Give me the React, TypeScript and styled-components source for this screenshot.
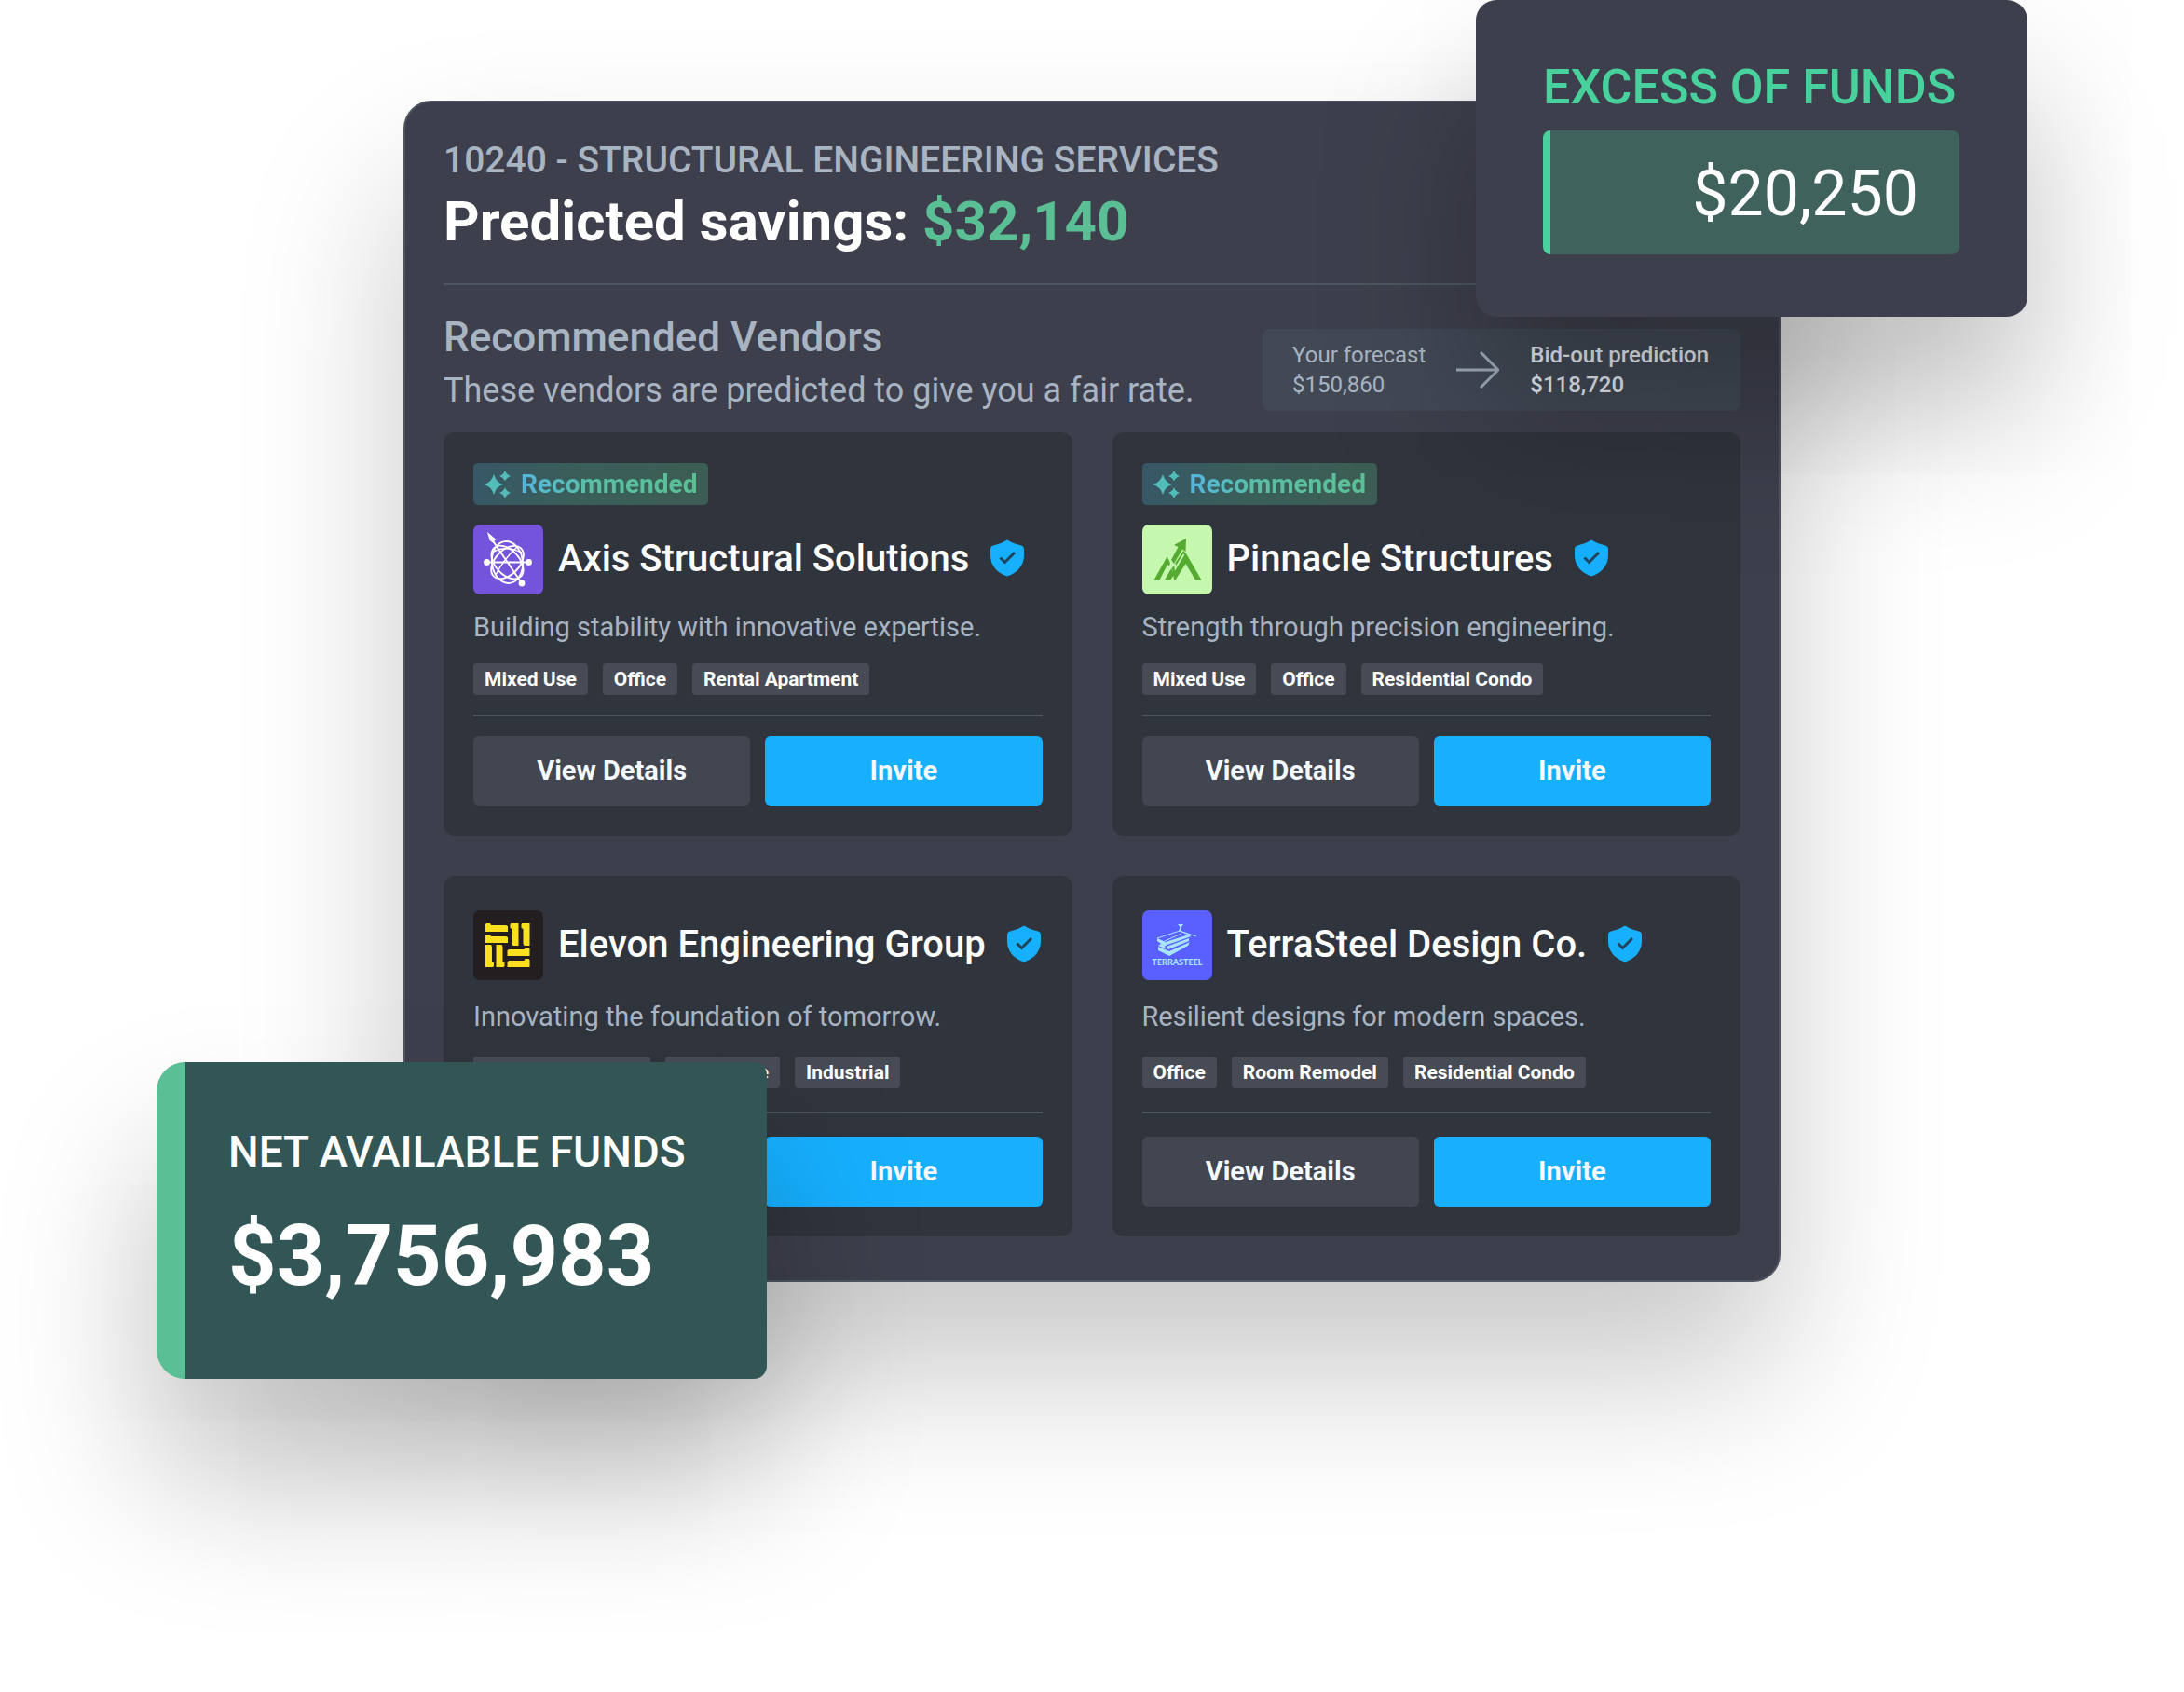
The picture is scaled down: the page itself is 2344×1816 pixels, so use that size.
import React from "react";
import styled, { createGlobalStyle, css } from "styled-components";

const GlobalStyle = createGlobalStyle`
  *, *::before, *::after { box-sizing: border-box; }
  body {
    margin: 0;
    background: #ffffff;
    font-family: Roboto, "Liberation Sans", sans-serif;
    -webkit-font-smoothing: antialiased;
  }
  h1, h2, h3, p, ul { margin: 0; padding: 0; }
`;

const color = {
  panel: "#3d3f4c",
  card: "#30343d",
  line: "#4e5560",
  muted: "#a9b4c2",
  white: "#ffffff",
  green: "#5bbf95",
  mint: "#48d19c",
  blue: "#16b0ff",
};

const Page = styled.main`
  display: grid;
  grid-template-columns: 433fr 1478fr 433fr;
  min-height: 100vh;
  padding: 108px 0;
  overflow: hidden;
  align-items: start;
`;

const Stage = styled.div`
  grid-column: 2;
  position: relative;
`;

const Panel = styled.section`
  display: flex;
  flex-direction: column;
  padding: 40px 41px 47px;
  background: ${color.panel};
  border: 2px solid ${color.line};
  border-radius: 30px;
  box-shadow: 0 96px 172px rgba(0, 0, 0, 0.22);
`;

const PanelHeader = styled.header`
  padding-bottom: 30px;
  border-bottom: 2px solid ${color.line};
`;

const ServiceName = styled.p`
  color: ${color.muted};
  font-size: 39px;
  font-weight: 500;
  line-height: 44px;
`;

const Savings = styled.h1`
  color: ${color.white};
  font-size: 60px;
  font-weight: 700;
  line-height: 72px;
  margin-top: 8px;
`;

const SavingsAmount = styled.span`
  color: ${color.green};
`;

const VendorsIntro = styled.div`
  display: flex;
  justify-content: space-between;
  align-items: flex-end;
  padding: 30px 0 23px;
`;

const IntroTitle = styled.h2`
  color: ${color.muted};
  font-size: 44px;
  font-weight: 500;
  line-height: 52px;
`;

const IntroText = styled.p`
  color: ${color.muted};
  font-size: 36px;
  line-height: 44px;
  padding: 9px 0 0;
`;

const Forecast = styled.div`
  display: flex;
  align-items: center;
  gap: 33px;
  padding: 12px 34px 12px 32px;
  border-radius: 8px;
  background: #424955;
`;

const ForecastItem = styled.div<{ $strong?: boolean }>`
  font-size: 24px;
  line-height: 32px;
  color: ${(p) => (p.$strong ? "#e6ebf2" : color.muted)};
  font-weight: ${(p) => (p.$strong ? 500 : 400)};
`;

const VendorGrid = styled.div`
  display: grid;
  grid-template-columns: 1fr 1fr;
  gap: 43px;
`;

const Card = styled.article<{ $featured?: boolean }>`
  display: flex;
  flex-direction: column;
  gap: ${(p) => (p.$featured ? 21 : 25)}px;
  padding: ${(p) => (p.$featured ? 33 : 37)}px 32px 32px;
  border-radius: 12px;
  background: ${color.card};
`;

const Badge = styled.div`
  align-self: flex-start;
  display: flex;
  align-items: center;
  gap: 9px;
  height: 45px;
  padding: 0 12px 0 11px;
  border-radius: 5px;
  background: linear-gradient(100deg, #375766 0%, #3a5f59 45%, #3c5d53 100%);
`;

const BadgeText = styled.span`
  font-size: 28px;
  font-weight: 700;
  line-height: 32px;
  color: transparent;
  background: linear-gradient(100deg, #55b4e0 0%, #5bbfa5 40%, #5bbf95 100%);
  background-clip: text;
  -webkit-background-clip: text;
`;

const VendorHeading = styled.div`
  display: flex;
  align-items: center;
  gap: 16px;
`;

const LogoTile = styled.svg`
  flex: none;
  width: 75px;
  height: 75px;
  border-radius: 7px;
`;

const VendorName = styled.h3`
  color: ${color.white};
  font-size: 40px;
  font-weight: 500;
  line-height: 48px;
  white-space: nowrap;
  padding-bottom: 2px;
`;

const ShieldIcon = styled.svg`
  flex: none;
  width: 38px;
  height: 40px;
  margin: 0 0 4px 6px;
`;

const Tagline = styled.p`
  color: ${color.muted};
  font-size: 29px;
  line-height: 28px;
  margin-bottom: 4px;
`;

const TagList = styled.ul`
  display: flex;
  gap: 16px;
  list-style: none;
`;

const Tag = styled.li`
  padding: 0 12px;
  border-radius: 4px;
  background: #474b55;
  color: ${color.white};
  font-size: 21px;
  font-weight: 700;
  line-height: 34px;
  white-space: nowrap;
`;

const Rule = styled.hr`
  width: 100%;
  height: 2px;
  margin: 0;
  border: 0;
  background: ${color.line};
`;

const Actions = styled.div`
  display: grid;
  grid-template-columns: 1fr 1fr;
  gap: 16px;
`;

const ActionButton = styled.button<{ $primary?: boolean }>`
  height: 75px;
  padding: 0 0 2px;
  border: 0;
  border-radius: 6px;
  background: ${(p) => (p.$primary ? color.blue : "#424651")};
  color: #f4f8ff;
  font-family: inherit;
  font-size: 29px;
  font-weight: 700;
  cursor: pointer;
`;

const floating = css`
  position: absolute;
  height: 340px;
  box-shadow: 0 104px 164px rgba(0, 0, 0, 0.26);
`;

const ExcessCard = styled.aside`
  ${floating}
  top: -108px;
  right: -265px;
  width: 592px;
  padding: 63px 73px 0 72px;
  border-radius: 22px;
  background: ${color.panel};
`;

const ExcessLabel = styled.p`
  color: ${color.mint};
  font-size: 52px;
  font-weight: 500;
  line-height: 62px;
  white-space: nowrap;
`;

const ExcessValue = styled.p`
  height: 133px;
  margin-top: 15px;
  padding-right: 44px;
  border-left: 8px solid ${color.mint};
  border-radius: 8px;
  background: #3f625d;
  color: ${color.white};
  font-size: 68px;
  line-height: 136px;
  text-align: right;
`;

const NetCard = styled.aside`
  ${floating}
  left: -265px;
  bottom: -104px;
  width: 655px;
  padding: 70px 46px 0;
  border-left: 31px solid ${color.green};
  border-radius: 31px 14px 14px 31px;
  background: #325655;
`;

const NetLabel = styled.p`
  color: ${color.white};
  font-size: 46px;
  font-weight: 500;
  line-height: 52px;
  white-space: nowrap;
`;

const NetValue = styled.p`
  color: ${color.white};
  font-size: 90px;
  font-weight: 700;
  line-height: 106px;
  margin-top: 34px;
`;

function Sparkles() {
  return (
    <svg width="31" height="32" viewBox="0 0 31 32" aria-hidden="true">
      <g fill="#53bdb9">
        <path d="M11 5 Q13.500 14 21 16 Q13.500 18 11 27 Q8.500 18 0 16 Q8.500 14 11 5Z" />
        <path d="M23 1 Q24.500 5.500 29 7 Q24.500 8.500 23 12.500 Q21.500 8.500 17 7 Q21.500 5.500 23 1Z" />
        <path d="M23 19 Q24.500 23.500 29 25 Q24.500 26.500 23 31 Q21.500 26.500 17 25 Q21.500 23.500 23 19Z" />
      </g>
    </svg>
  );
}

function Shield() {
  return (
    <ShieldIcon viewBox="0 0 38 40" role="img" aria-label="Verified">
      <path
        d="M19 0.500 C23 3 28 5 34 6.500 Q37 7.300 37 10.500 V17 C37 28 30 36 19 39.500 C8 36 1 28 1 17 V10.500 Q1 7.300 4 6.500 C10 5 15 3 19 0.500Z"
        fill={color.blue}
      />
      <path d="M11.500 19.500 L16.500 24.500 L27 14" fill="none" stroke="#20445c" strokeWidth="3" />
    </ShieldIcon>
  );
}

function ArrowRight() {
  return (
    <svg width="46" height="40" viewBox="0 0 46 40" aria-hidden="true">
      <path d="M0 20 H44 M26 1 L45 20 L26 39" fill="none" stroke="#9fabb9" strokeWidth="3" />
    </svg>
  );
}

function AxisLogo() {
  return (
    <LogoTile viewBox="0 0 75 75" aria-hidden="true">
      <rect width="75" height="75" fill="#7554dc" />
      <g fill="none" stroke="#fff" strokeWidth="1.900">
        <ellipse cx="36.500" cy="40.500" rx="16.500" ry="22.500" transform="rotate(-7 36.500 40.500)" />
        <ellipse cx="36.500" cy="40.500" rx="13" ry="21" transform="rotate(-42 36.500 40.500)" />
        <ellipse cx="36.500" cy="40.500" rx="13" ry="21" transform="rotate(44 36.500 40.500)" />
        <path d="M14 40.500 H60 M20 16 L52 63" />
        <path d="M22 29 Q34 22 52 30 M24 54 Q32 38 47 24" strokeWidth="1.500" />
      </g>
      <path d="M15 8 L24.500 16 L22.500 17.500 L22 20 L17.500 17Z" fill="#fff" />
      <circle cx="14.500" cy="40.500" r="3.400" fill="#fff" />
      <circle cx="59.500" cy="40.500" r="3.400" fill="#fff" />
      <circle cx="52" cy="63" r="3.400" fill="#fff" />
    </LogoTile>
  );
}

function PinnacleLogo() {
  return (
    <LogoTile viewBox="0 0 75 75" aria-hidden="true">
      <rect width="75" height="75" fill="#c6f7ae" />
      <g fill="#55ab32">
        <path d="M47 15 L34 22 L38.500 24 L31 38 L34 42 L43 26.500 L46.500 29Z" />
        <path d="M12.500 59.500 L26.500 34.500 L30 41 L29 44.500 L27 43 L18.500 59.500Z" />
        <path d="M24 59.500 L30.500 48 L33 50 L47 31 L63.500 59.500 H57 L46.500 42 L35.500 59.500 H34 L33.500 55 L30 59.500Z" />
        <path d="M31 48 L44 28 L47 31 L36 52Z" />
      </g>
      <path d="M32 45 L35 43 L35.500 47 L44.500 32" fill="none" stroke="#c6f7ae" strokeWidth="1.800" />
    </LogoTile>
  );
}

const oneGlyph = "M0 1 L1 0 H9 V24 H3 L2 22 V6 L0 5Z";

function ElevonLogo() {
  return (
    <LogoTile viewBox="0 0 75 75" aria-hidden="true">
      <rect width="75" height="75" fill="#231f20" />
      <g fill="#fae01f">
        <path d={oneGlyph} transform="translate(39.500 14)" />
        <path d={oneGlyph} transform="translate(51.500 14)" />
        <path d={oneGlyph} transform="translate(22 61) rotate(180)" />
        <path d={oneGlyph} transform="translate(33.500 61) rotate(180)" />
        <path d={oneGlyph} transform="matrix(0 1 1 0 13 14)" />
        <path d={oneGlyph} transform="matrix(0 1 1 0 13 26)" />
        <path d={oneGlyph} transform="matrix(0 1 -1 0 60.500 40)" />
        <path d={oneGlyph} transform="matrix(0 1 -1 0 60.500 52)" />
      </g>
    </LogoTile>
  );
}

function TerraSteelLogo() {
  return (
    <LogoTile viewBox="0 0 75 75" aria-hidden="true">
      <rect width="75" height="75" fill="#5a5fff" />
      <g fill="#a9e4ff">
        <path d="M38 15 H44 L42 18 V22 H39 L40.500 18Z" />
        <path d="M16 30 L25 34 L27 37 L24 38.500 L25 41.500 L17 38 L20 36 L16 33Z" />
        <path d="M25 34 L50 26 L52 28 L27 37Z" />
        <path d="M26 39 L50 30 L50 33 L28 42Z" />
        <path d="M17 39 L29 44 L51 34 L49 38 L29 49 L17 43Z" />
      </g>
      <path d="M16 30 L40 22 L58 28 M40 22 L52 27 M24 33 L42 25" fill="none" stroke="#a9e4ff" strokeWidth="1" />
      <text x="37.500" y="59" textAnchor="middle" fill="#a9e4ff" fontFamily="Lato, sans-serif" fontSize="9" fontWeight="900">
        TERRASTEEL
      </text>
    </LogoTile>
  );
}

interface Vendor {
  name: string;
  tagline: string;
  tags: string[];
  featured?: boolean;
  Logo: () => React.JSX.Element;
}

const vendors: Vendor[] = [
  {
    name: "Axis Structural Solutions",
    tagline: "Building stability with innovative expertise.",
    tags: ["Mixed Use", "Office", "Rental Apartment"],
    featured: true,
    Logo: AxisLogo,
  },
  {
    name: "Pinnacle Structures",
    tagline: "Strength through precision engineering.",
    tags: ["Mixed Use", "Office", "Residential Condo"],
    featured: true,
    Logo: PinnacleLogo,
  },
  {
    name: "Elevon Engineering Group",
    tagline: "Innovating the foundation of tomorrow.",
    tags: ["Rental Apartment", "Mixed Use", "Industrial"],
    Logo: ElevonLogo,
  },
  {
    name: "TerraSteel Design Co.",
    tagline: "Resilient designs for modern spaces.",
    tags: ["Office", "Room Remodel", "Residential Condo"],
    Logo: TerraSteelLogo,
  },
];

function VendorCard({ name, tagline, tags, featured, Logo }: Vendor) {
  return (
    <Card $featured={featured}>
      {featured && (
        <Badge>
          <Sparkles />
          <BadgeText>Recommended</BadgeText>
        </Badge>
      )}
      <VendorHeading>
        <Logo />
        <VendorName>{name}</VendorName>
        <Shield />
      </VendorHeading>
      <Tagline>{tagline}</Tagline>
      <TagList>
        {tags.map((tag) => (
          <Tag key={tag}>{tag}</Tag>
        ))}
      </TagList>
      <Rule />
      <Actions>
        <ActionButton type="button">View Details</ActionButton>
        <ActionButton type="button" $primary>
          Invite
        </ActionButton>
      </Actions>
    </Card>
  );
}

export default function App() {
  return (
    <>
      <GlobalStyle />
      <Page>
        <Stage>
          <Panel>
            <PanelHeader>
              <ServiceName>10240 - STRUCTURAL ENGINEERING SERVICES</ServiceName>
              <Savings>
                Predicted savings: <SavingsAmount>$32,140</SavingsAmount>
              </Savings>
            </PanelHeader>
            <VendorsIntro>
              <div>
                <IntroTitle>Recommended Vendors</IntroTitle>
                <IntroText>These vendors are predicted to give you a fair rate.</IntroText>
              </div>
              <Forecast>
                <ForecastItem>
                  <p>Your forecast</p>
                  <p>$150,860</p>
                </ForecastItem>
                <ArrowRight />
                <ForecastItem $strong>
                  <p>Bid-out prediction</p>
                  <p>$118,720</p>
                </ForecastItem>
              </Forecast>
            </VendorsIntro>
            <VendorGrid>
              {vendors.map((vendor) => (
                <VendorCard key={vendor.name} {...vendor} />
              ))}
            </VendorGrid>
          </Panel>
          <ExcessCard>
            <ExcessLabel>EXCESS OF FUNDS</ExcessLabel>
            <ExcessValue>$20,250</ExcessValue>
          </ExcessCard>
          <NetCard>
            <NetLabel>NET AVAILABLE FUNDS</NetLabel>
            <NetValue>$3,756,983</NetValue>
          </NetCard>
        </Stage>
      </Page>
    </>
  );
}
